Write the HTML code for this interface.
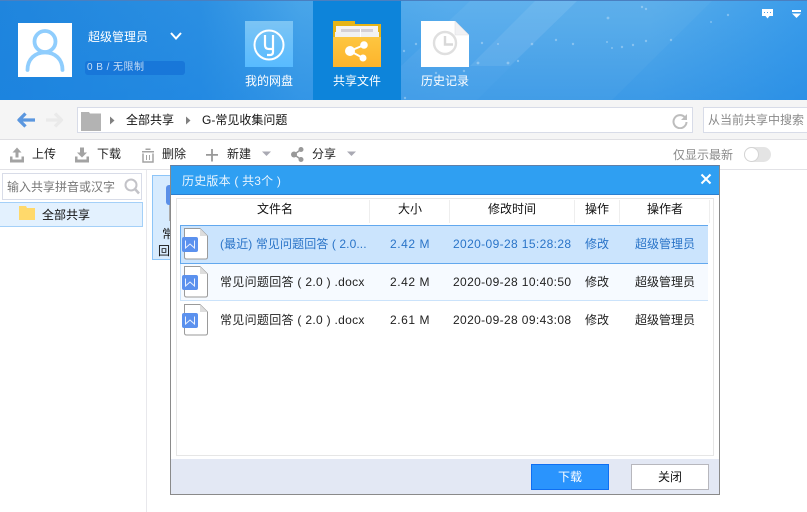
<!DOCTYPE html>
<html><head><meta charset="utf-8">
<style>
*{box-sizing:border-box}
html,body{margin:0;padding:0;width:807px;height:512px;overflow:hidden;background:#fff}
body{font-family:"Liberation Sans","Noto Sans CJK SC",sans-serif;font-size:12px;color:#222;position:relative}
.a{position:absolute;white-space:nowrap;line-height:16px}
.b{position:absolute}
.w{color:#fff}
</style></head><body>
<!-- header -->
<div class="b" style="left:0;top:0;width:807px;height:100px;background:linear-gradient(to bottom,rgba(25,130,225,0),rgba(25,130,225,.45)),linear-gradient(to right,#1f85dd 0,#2b8fe2 200px,#48a5e9 300px,#58adec 450px,#58adeb 650px,#3a9cea 807px);border-top:1px solid #4a7fc0"></div>
<svg class="b" style="left:0;top:1px" width="807" height="99">
<polygon points="577,0 712,0 612,99 477,99" fill="#fff" opacity=".035"/>
<polygon points="470,0 577,0 477,99 401,99 401,65" fill="#fff" opacity=".05"/>
<polygon points="535,0 577,0 510,65 470,65" fill="#fff" opacity=".08"/>
<g fill="#fff" opacity=".3"><circle cx="404" cy="50" r="1.200"/><circle cx="416" cy="43" r="1.200"/><circle cx="482" cy="42" r="1.200"/><circle cx="498" cy="43" r="1"/><circle cx="532" cy="43" r="1.300"/><circle cx="556" cy="39" r="1.200"/><circle cx="573" cy="43" r="1.200"/><circle cx="607" cy="41" r="1"/><circle cx="612" cy="47" r="1"/><circle cx="622" cy="46" r="1.200"/><circle cx="633" cy="44" r="1.200"/><circle cx="646" cy="40" r="1.200"/><circle cx="671" cy="39" r="1.200"/><circle cx="478" cy="62" r="1.400"/><circle cx="508" cy="62" r="1.400"/><circle cx="518" cy="60" r="1.200"/><circle cx="608" cy="17" r="1.400"/><circle cx="642" cy="6" r="1.200"/><circle cx="646" cy="8" r="1.200"/><circle cx="728" cy="14" r="1.200"/><circle cx="711" cy="21" r="1"/><circle cx="436" cy="72" r="1.200"/><circle cx="464" cy="70" r="1.200"/><circle cx="405" cy="97" r="1.200"/></g>
</svg>
<div class="b" style="left:313px;top:1px;width:88px;height:99px;background:#0d84da"></div>
<!-- avatar -->
<div class="b" style="left:18px;top:23px;width:54px;height:54px;background:#fff"></div>
<svg class="b" style="left:18px;top:23px" width="54" height="54" fill="none" stroke="#8fcdfd" stroke-width="3.800" stroke-linecap="round"><circle cx="27" cy="18.500" r="10.500"/><path d="M9.500 47C9.500 36 17 29.500 27 29.500S44.500 36 44.500 47"/></svg>
<div class="a w" style="left:88px;top:29px">超级管理员</div>
<svg class="b" style="left:170px;top:31px" width="12" height="10" fill="none" stroke="#fff" stroke-width="2"><path d="M1 2L6 7.500 11 2"/></svg>
<div class="b" style="left:85px;top:61px;width:100px;height:14px;background:#1877d9;border-radius:3px"></div>
<div class="a" style="left:87px;top:61px;font-size:10px;line-height:14px;color:#c9dff6;letter-spacing:.45px">0 B / 无限制</div>
<!-- nav icons -->
<div class="b" style="left:245px;top:21px;width:48px;height:46px;background:linear-gradient(#7cc4f4,#58bbff)"></div>
<svg class="b" style="left:245px;top:21px" width="48" height="46" fill="none" stroke="#fff" stroke-width="2"><circle cx="24" cy="24" r="14.500"/><path d="M20 14V24Q20 28 24 28H28M28 14V31Q28 34 25 34H22" stroke-width="2.200"/></svg>
<div class="a w" style="left:245px;top:73px">我的网盘</div>
<svg class="b" style="left:333px;top:21px" width="48" height="46"><path d="M0 0H22V3H48V46H0Z" fill="#e6b417"/><rect x="3" y="5" width="42" height="8" fill="#f5f3f3"/><rect x="2" y="11" width="44" height="7" fill="#f1f1f1"/><rect x="8" y="8" width="32" height="3" fill="#d4d0d6"/><rect x="27" y="8" width="1" height="8" fill="#fff"/><rect x="0" y="16" width="48" height="30" fill="url(#fg)"/><defs><linearGradient id="fg" x1="0" y1="0" x2="0" y2="1"><stop offset="0" stop-color="#fdc640"/><stop offset="1" stop-color="#fdb42c"/></linearGradient></defs><g fill="#fff"><circle cx="17" cy="30" r="5"/><circle cx="31" cy="24" r="3.800"/><circle cx="30" cy="37" r="3.500"/></g><path d="M31 24L17 30 30 37" stroke="#fff" stroke-width="2" fill="none"/></svg>
<div class="a w" style="left:333px;top:73px">共享文件</div>
<svg class="b" style="left:421px;top:21px" width="48" height="46"><path d="M0 0H34L48 14V46H0Z" fill="#fff"/><path d="M34 0V14H48Z" fill="#f1f1f3" stroke="#e2e2e4" stroke-width=".6"/><circle cx="24" cy="22" r="11" fill="none" stroke="#dfdfdf" stroke-width="2.400"/><path d="M24 15V23.500H32" fill="none" stroke="#d8d8d8" stroke-width="2.400"/></svg>
<div class="a w" style="left:421px;top:73px">历史记录</div>
<!-- top-right icons -->
<svg class="b" style="left:761px;top:9px" width="42" height="11"><path d="M1 0H12V7H8.500L6.500 9.500 4.500 7H1Z" fill="#fff"/><g fill="#4a9fe6"><rect x="3" y="3" width="1" height="1"/><rect x="6" y="3" width="1" height="1"/><rect x="9" y="3" width="1" height="1"/></g><rect x="31" y="1" width="9" height="2" fill="#fff"/><path d="M31 4.500H40L35.500 9Z" fill="#fff"/></svg>
<!-- address bar -->
<div class="b" style="left:0;top:100px;width:807px;height:40px;background:#f5f5f5;border-bottom:1px solid #dfdfe3"></div>
<svg class="b" style="left:16px;top:110px" width="50" height="20" fill="none" stroke-width="3.300" stroke-linejoin="round"><path d="M19 10H3M9.500 3.500L3 10 9.500 16.500" stroke="#5b97df"/><path d="M30 10H46M39 3.500L45.500 10 39 16.500" stroke="#eaeaea"/></svg>
<div class="b" style="left:77px;top:107px;width:616px;height:26px;background:#fff;border:1px solid #d8dce8"></div>
<svg class="b" style="left:81px;top:111px" width="20" height="20"><path d="M0 1H8L9 2.500H20V20H0Z" fill="#b3b3b3"/></svg>
<svg class="b" style="left:110px;top:116px" width="6" height="9" fill="#808080"><path d="M0 .5L4.500 4.500 0 8.500Z"/></svg>
<div class="a" style="left:126px;top:112px;color:#111">全部共享</div>
<svg class="b" style="left:186px;top:116px" width="6" height="9" fill="#808080"><path d="M0 .5L4.500 4.500 0 8.500Z"/></svg>
<div class="a" style="left:202px;top:112px;color:#111">G-常见收集问题</div>
<svg class="b" style="left:672px;top:113px" width="16" height="16" fill="none" stroke="#bdbdbd" stroke-width="2"><path d="M13 4.500A6.500 6.500 0 1 0 14.500 9"/><path d="M15 1V7H9Z" fill="#bdbdbd" stroke="none"/></svg>
<div class="b" style="left:703px;top:107px;width:110px;height:26px;background:#fff;border:1px solid #d8dce8"></div>
<div class="a" style="left:708px;top:112px;color:#8a8a8a">从当前共享中搜索</div>
<!-- toolbar -->
<div class="b" style="left:0;top:169px;width:807px;height:1px;background:#e2e2e6"></div>
<svg class="b" style="left:10px;top:146px" width="340" height="17" fill="#a3a3a3">
<path d="M7 1.500L2.500 6.500H5.500V11.500H8.500V6.500H11.500Z"/><path d="M0 10.500H2.500V13.500H11.500V10.500H14V16.500H0Z"/>
<path d="M70 1.500H74V6.500H77L72 11.500 67 6.500H70Z"/><path d="M65 10.500H67.500V13.500H76.500V10.500H79V16.500H65Z"/>
<path d="M132 5H144V6.500H132ZM135.500 2.500H140.500V4H135.500Z"/><path d="M133 7.500V16H143V7.500" fill="none" stroke="#a3a3a3" stroke-width="1.500"/><path d="M136 9H137V14H136ZM139 9H140V14H139Z"/>
<path d="M196 8H208V9.800H196ZM201.100 3H202.900V15.500H201.100Z" fill="#999"/>
<circle cx="284" cy="8.500" r="3" fill="#999"/><circle cx="291" cy="3.500" r="2.500" fill="#999"/><circle cx="291" cy="13.500" r="2.500" fill="#999"/><path d="M291 3.500L284 8.500 291 13.500" fill="none" stroke="#999" stroke-width="1.500"/>
</svg>
<div class="a" style="left:32px;top:146px">上传</div>
<div class="a" style="left:97px;top:146px">下载</div>
<div class="a" style="left:162px;top:146px">删除</div>
<div class="a" style="left:227px;top:146px">新建</div>
<svg class="b" style="left:262px;top:151px" width="10" height="6" fill="#a9a9b3"><path d="M0 0.500H9L4.500 5Z"/></svg>
<div class="a" style="left:312px;top:146px">分享</div>
<svg class="b" style="left:347px;top:151px" width="10" height="6" fill="#a9a9b3"><path d="M0 0.500H9L4.500 5Z"/></svg>
<div class="a" style="left:673px;top:147px;color:#8a8a8a">仅显示最新</div>
<div class="b" style="left:744px;top:147px;width:27px;height:15px;border-radius:8px;background:#e4e4e4"></div>
<div class="b" style="left:744px;top:147px;width:15px;height:15px;border-radius:50%;background:#fff;border:1px solid #d4d4d4"></div>
<!-- sidebar -->
<div class="b" style="left:146px;top:170px;width:1px;height:342px;background:#e8e8ec"></div>
<div class="b" style="left:2px;top:173px;width:140px;height:27px;border:1px solid #d8dce8;background:#fff"></div>
<div class="a" style="left:7px;top:179px;color:#777">输入共享拼音或汉字</div>
<svg class="b" style="left:124px;top:178px" width="16" height="17" fill="none" stroke="#c3c3c8" stroke-width="2"><circle cx="7" cy="7" r="5.500"/><path d="M11 11L15 15.500" stroke-width="2.500"/></svg>
<div class="b" style="left:0;top:202px;width:143px;height:25px;background:#e3f1fe;border:1px solid #a4d0f8;border-left:0"></div>
<svg class="b" style="left:19px;top:206px" width="16" height="14"><path d="M0 0H7L8 2H16V14H0Z" fill="#ffd96b"/></svg>
<div class="a" style="left:42px;top:207px;color:#111">全部共享</div>
<!-- selected file behind -->
<div class="b" style="left:152px;top:175px;width:20px;height:85px;background:#d7ebfe;border:1px solid #8dc5f8"></div>
<div class="b" style="left:166px;top:185px;width:6px;height:20px;background:#5a8fe8;border-radius:3px 0 0 3px"></div>
<div class="b" style="left:169px;top:205px;width:2px;height:16px;background:#aaa"></div>
<div class="a" style="left:162px;top:226px;color:#111">常</div>
<div class="a" style="left:158px;top:243px;color:#111">回</div>
<!-- dialog -->
<div class="b" style="left:170px;top:165px;width:550px;height:330px;background:#fff;border:1px solid #8a8a8a;border-top-color:#5f7fa8"></div>
<div class="b" style="left:171px;top:166px;width:548px;height:29px;background:#2f9ff2;border-bottom:1px solid #2a7fd0"></div>
<div class="a" style="left:182px;top:173px;color:#e8f4fe;letter-spacing:.2px">历史版本 ( 共3个 )</div>
<svg class="b" style="left:700px;top:173px" width="12" height="12" fill="none" stroke="#fff" stroke-width="2"><path d="M1.500 1.500L10.500 10.500M10.500 1.500L1.500 10.500"/></svg>
<div class="b" style="left:176px;top:198px;width:538px;height:258px;border:1px solid #e6e6e6;background:#fff"></div>
<div class="b" style="left:369px;top:200px;width:1px;height:23px;background:#eee"></div>
<div class="b" style="left:449px;top:200px;width:1px;height:23px;background:#eee"></div>
<div class="b" style="left:574px;top:200px;width:1px;height:23px;background:#eee"></div>
<div class="b" style="left:619px;top:200px;width:1px;height:23px;background:#eee"></div>
<div class="b" style="left:709px;top:200px;width:1px;height:23px;background:#eee"></div>
<div class="a" style="left:257px;top:201px;color:#111">文件名</div>
<div class="a" style="left:398px;top:201px;color:#111">大小</div>
<div class="a" style="left:488px;top:201px;color:#111">修改时间</div>
<div class="a" style="left:585px;top:201px;color:#111">操作</div>
<div class="a" style="left:647px;top:201px;color:#111">操作者</div>
<!-- rows -->
<div class="b" style="left:180px;top:225px;width:528px;height:39px;background:#cbe4fd;border:1px solid #62a8ee;border-right:0"></div>
<div class="b" style="left:180px;top:264px;width:528px;height:37px;background:#f6faff;border:1px solid #cbe3fb;border-top:0;border-right:0"></div>
<svg class="b" style="left:182px;top:228px" width="28" height="32"><path d="M2.500 .5H18L25.500 8V29Q25.500 31 23.500 31H4.500Q2.500 31 2.500 29Z" fill="#fff" stroke="#9a9a9a"/><path d="M18 .5V8H25.500Z" fill="#ddd"/><rect x="0" y="9" width="16" height="15" rx="2" fill="#5b91ee"/><path d="M3.500 12.500V20L8 16 12.500 20V12.500" fill="none" stroke="#eaf1fe" stroke-width="1"/></svg>
<svg class="b" style="left:182px;top:266px" width="28" height="32"><path d="M2.500 .5H18L25.500 8V29Q25.500 31 23.500 31H4.500Q2.500 31 2.500 29Z" fill="#fff" stroke="#9a9a9a"/><path d="M18 .5V8H25.500Z" fill="#ddd"/><rect x="0" y="9" width="16" height="15" rx="2" fill="#5b91ee"/><path d="M3.500 12.500V20L8 16 12.500 20V12.500" fill="none" stroke="#eaf1fe" stroke-width="1"/></svg>
<svg class="b" style="left:182px;top:304px" width="28" height="32"><path d="M2.500 .5H18L25.500 8V29Q25.500 31 23.500 31H4.500Q2.500 31 2.500 29Z" fill="#fff" stroke="#9a9a9a"/><path d="M18 .5V8H25.500Z" fill="#ddd"/><rect x="0" y="9" width="16" height="15" rx="2" fill="#5b91ee"/><path d="M3.500 12.500V20L8 16 12.500 20V12.500" fill="none" stroke="#eaf1fe" stroke-width="1"/></svg>
<div style="color:#2a74c8">
<div class="a" style="left:220px;top:236px;letter-spacing:.1px">(最近) 常见问题回答 ( 2.0...</div>
<div class="a" style="left:390px;top:236px;letter-spacing:.55px">2.42 M</div>
<div class="a" style="left:453px;top:236px;letter-spacing:.37px">2020-09-28 15:28:28</div>
<div class="a" style="left:585px;top:236px">修改</div>
<div class="a" style="left:635px;top:236px">超级管理员</div>
</div>
<div style="color:#222">
<div class="a" style="left:220px;top:274px;letter-spacing:.3px">常见问题回答 ( 2.0 ) .docx</div>
<div class="a" style="left:390px;top:274px;letter-spacing:.55px">2.42 M</div>
<div class="a" style="left:453px;top:274px;letter-spacing:.37px">2020-09-28 10:40:50</div>
<div class="a" style="left:585px;top:274px">修改</div>
<div class="a" style="left:635px;top:274px">超级管理员</div>
<div class="a" style="left:220px;top:312px;letter-spacing:.3px">常见问题回答 ( 2.0 ) .docx</div>
<div class="a" style="left:390px;top:312px;letter-spacing:.55px">2.61 M</div>
<div class="a" style="left:453px;top:312px;letter-spacing:.37px">2020-09-28 09:43:08</div>
<div class="a" style="left:585px;top:312px">修改</div>
<div class="a" style="left:635px;top:312px">超级管理员</div>
</div>
<!-- footer -->
<div class="b" style="left:171px;top:459px;width:548px;height:35px;background:#e3e8f4"></div>
<div class="b" style="left:531px;top:464px;width:78px;height:26px;background:#2a94fd;border:1px solid #0f6ff2"></div>
<div class="a w" style="left:558px;top:469px">下载</div>
<div class="b" style="left:631px;top:464px;width:78px;height:26px;background:#fff;border:1px solid #b7b7bd"></div>
<div class="a" style="left:658px;top:469px;color:#111">关闭</div>
</body></html>
